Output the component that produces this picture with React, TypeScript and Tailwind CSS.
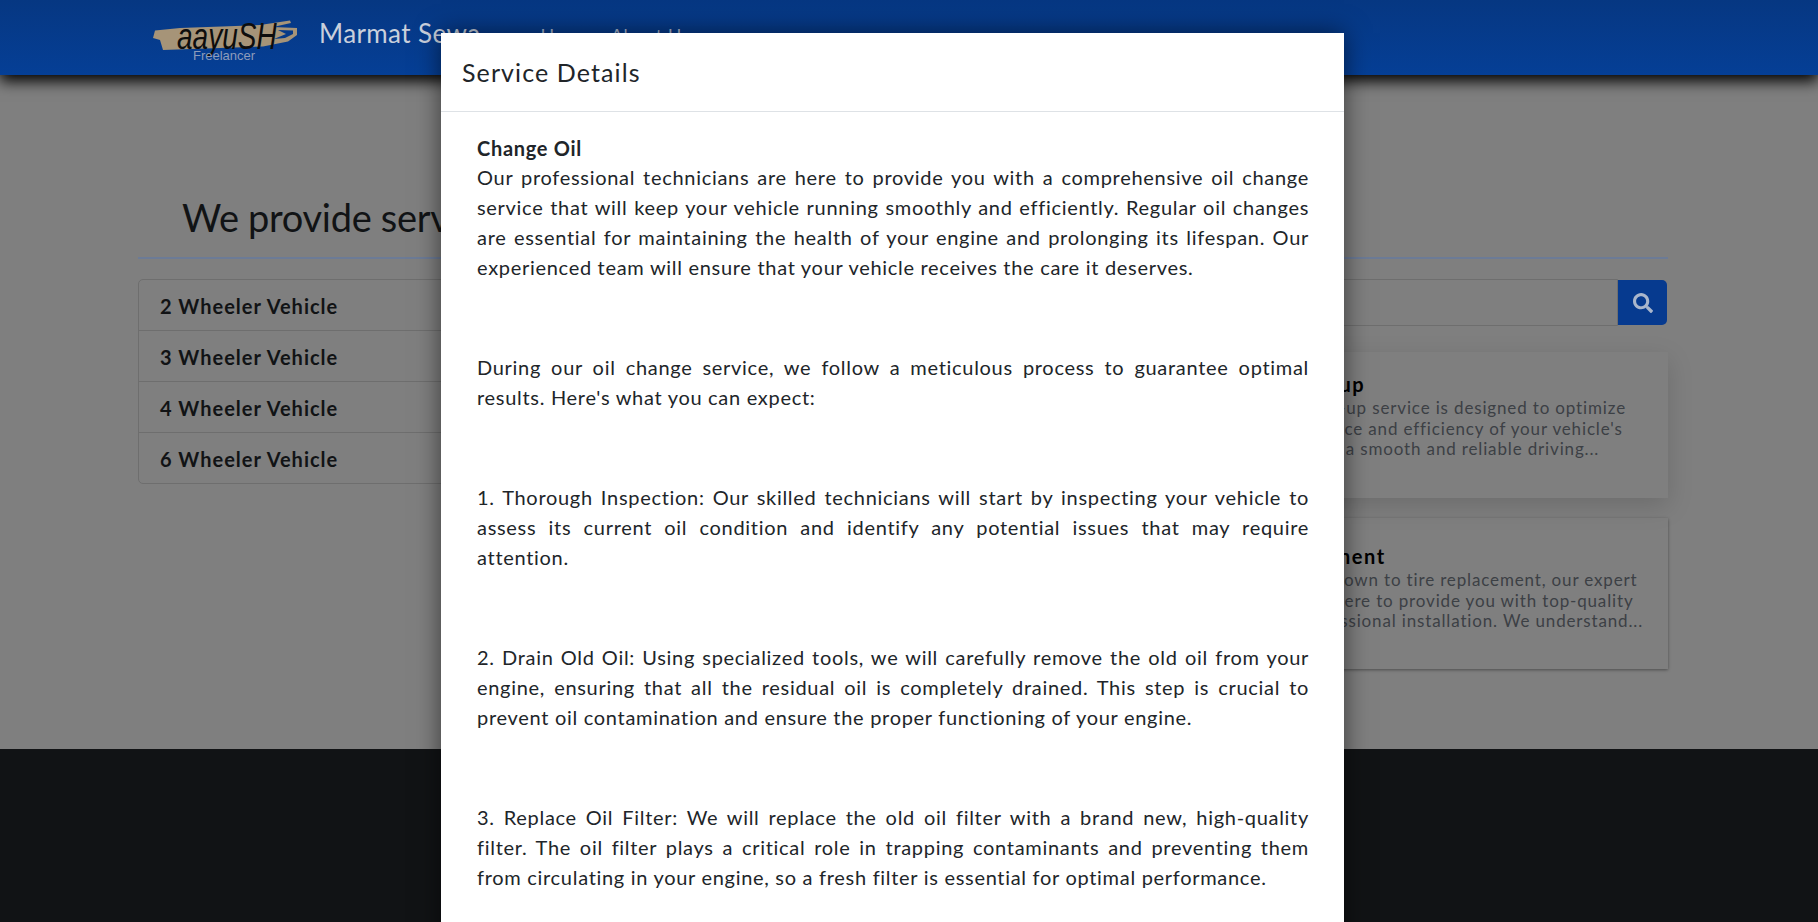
import { FaSearch } from 'react-icons/fa';

const vehicles = ['2 Wheeler Vehicle', '3 Wheeler Vehicle', '4 Wheeler Vehicle', '6 Wheeler Vehicle'];

// each inner array is one paragraph, broken where the page breaks it
const paragraphs = [
  [
    'Our professional technicians are here to provide you with a comprehensive oil change',
    'service that will keep your vehicle running smoothly and efficiently. Regular oil changes',
    'are essential for maintaining the health of your engine and prolonging its lifespan. Our',
    'experienced team will ensure that your vehicle receives the care it deserves.',
  ],
  [
    'During our oil change service, we follow a meticulous process to guarantee optimal',
    "results. Here's what you can expect:",
  ],
  [
    '1. Thorough Inspection: Our skilled technicians will start by inspecting your vehicle to',
    'assess its current oil condition and identify any potential issues that may require',
    'attention.',
  ],
  [
    '2. Drain Old Oil: Using specialized tools, we will carefully remove the old oil from your',
    'engine, ensuring that all the residual oil is completely drained. This step is crucial to',
    'prevent oil contamination and ensure the proper functioning of your engine.',
  ],
  [
    '3. Replace Oil Filter: We will replace the old oil filter with a brand new, high-quality',
    'filter. The oil filter plays a critical role in trapping contaminants and preventing them',
    'from circulating in your engine, so a fresh filter is essential for optimal performance.',
  ],
];

function Logo() {
  return (
    <div className="relative w-[150px] h-[46px] overflow-hidden shrink-0">
      <svg width="150" height="46" viewBox="0 0 150 46" className="absolute left-0 top-0">
        <path
          d="M5 15.5 L30 13 L110 10 L140 5.5 L141 8 L123 12 L147 13 L147 20 L138 26.5 L113 31.5 L13 35 L10 25 L3 23 Z"
          fill="#a69478"
        />
        <path d="M128 15 L143 15.5 L143 19 L135 23 L124 24 L136 19 Z" fill="#063a88" />
      </svg>
      <span className="absolute left-[27px] top-[2px] origin-top scale-y-[1.35] text-[28px] leading-[30px] italic font-['Liberation_Sans',sans-serif] text-[#0d0d0d]">
        aayuSH
      </span>
      <span className="absolute left-[43px] top-[32px] text-[13px] leading-[18px] text-[#8d9cbb] font-['Liberation_Sans',sans-serif]">
        Freelancer
      </span>
    </div>
  );
}

function Navbar() {
  return (
    <nav className="relative z-10 h-[75px] shrink-0 bg-gradient-to-b from-[#063782] to-[#053f96] shadow-[0_6px_14px_rgba(0,0,0,1)] flex items-center pl-[150px]">
      <Logo />
      <span className="ml-[19px] -mt-[9px] text-[26px] tracking-[0.4px] text-[#c9d0dc]">Marmat Sewa</span>
      <div className="ml-[60px] -mt-[4px] flex gap-[20px] text-[18px] tracking-[0.6px] text-[#aab7cf]">
        <span>Home</span>
        <span>About Us</span>
      </div>
    </nav>
  );
}

function ServiceCard({ title, lines, className }: { title: string; lines: string[]; className: string }) {
  return (
    <div className={`pl-[683px] pr-[30px] ${className}`}>
      <h5 className="text-[20px] leading-[27px] font-bold tracking-[1.6px] text-[#000]">{title}</h5>
      <div className="text-[17px] leading-[20.5px] tracking-[0.85px] text-[#3c4045] whitespace-nowrap">
        {lines.map((line) => (
          <div key={line}>{line}</div>
        ))}
      </div>
    </div>
  );
}

function ServicesPage() {
  return (
    <main className="h-[674px] shrink-0 ml-[138px] w-[1530px] flex flex-col">
      <h1 className="mt-[112px] pl-[44px] text-[38px] leading-[60px] tracking-[-0.3px] text-[#111315]">We provide services</h1>
      <hr className="mt-[10px] border-t-2 border-[#6c7b96]" />
      <div className="mt-[20px] flex gap-[24px]">
        <div className="w-[360px] shrink-0">
          <div className="rounded-[5px] border border-[#6e6e6e]">
            {vehicles.map((v) => (
              <div
                key={v}
                className="h-[51px] last:h-[50px] pt-[1px] px-[21px] flex items-center text-[20px] font-bold tracking-[1px] text-[#111315] border-b border-[#6e6e6e] last:border-b-0"
              >
                {v}
              </div>
            ))}
          </div>
        </div>
        <div className="flex-1 min-w-0">
          <div className="flex h-[47px]">
            <div className="flex-1 border border-[#6e6e6e] rounded-l-[5px]" />
            <button className="w-[49px] mr-[1px] my-[1px] bg-[#063a8f] rounded-r-[5px] flex items-center justify-center">
              <FaSearch size={20} className="text-[#a9b6cc]" />
            </button>
          </div>
          <ServiceCard
            title="Engine Tune-up"
            lines={[
              'Our engine tune-up service is designed to optimize',
              "entire performance and efficiency of your vehicle's",
              'engine, ensuring a smooth and reliable driving...',
            ]}
            className="mt-[26px] h-[146px] pt-[19px] shadow-[0_8px_24px_rgba(0,0,0,0.15)]"
          />
          <ServiceCard
            title="Tire Replacement"
            lines={[
              'When it comes down to tire replacement, our expert',
              'technicians are here to provide you with top-quality',
              'tires and a professional installation. We understand...',
            ]}
            className="mt-[20px] h-[151px] pt-[25px] shadow-[0_1px_3px_rgba(0,0,0,0.4)]"
          />
        </div>
      </div>
    </main>
  );
}

function ServiceModal() {
  return (
    <div className="absolute z-20 left-[441px] top-[33px] w-[903px] bg-white shadow-[0_0_24px_rgba(0,0,0,0.55)] text-[#212529]">
      <div className="h-[79px] pl-[21px] flex items-center border-b border-[#dee2e6]">
        <h5 className="text-[25px] leading-[30px] tracking-[1.1px]">Service Details</h5>
      </div>
      <div className="pl-[36px] pr-[35px] pt-[21px] text-[20px] leading-[30px] tracking-[0.7px]">
        <b className="block h-[29px] font-bold">Change Oil</b>
        {paragraphs.map((lines) => (
          <p key={lines[0]} className="mb-[70px]">
            {lines.map((line, i) => (
              <span
                key={line}
                className={
                  i < lines.length - 1
                    ? 'block whitespace-nowrap text-justify [text-align-last:justify]'
                    : 'block whitespace-nowrap'
                }
              >
                {line}
              </span>
            ))}
          </p>
        ))}
      </div>
    </div>
  );
}

export default function App() {
  return (
    <div className="relative h-[922px] overflow-hidden bg-[#7f7f7f] flex flex-col font-['Lato',sans-serif]">
      <Navbar />
      <ServicesPage />
      <footer className="flex-1 bg-[#111315]" />
      <ServiceModal />
    </div>
  );
}
